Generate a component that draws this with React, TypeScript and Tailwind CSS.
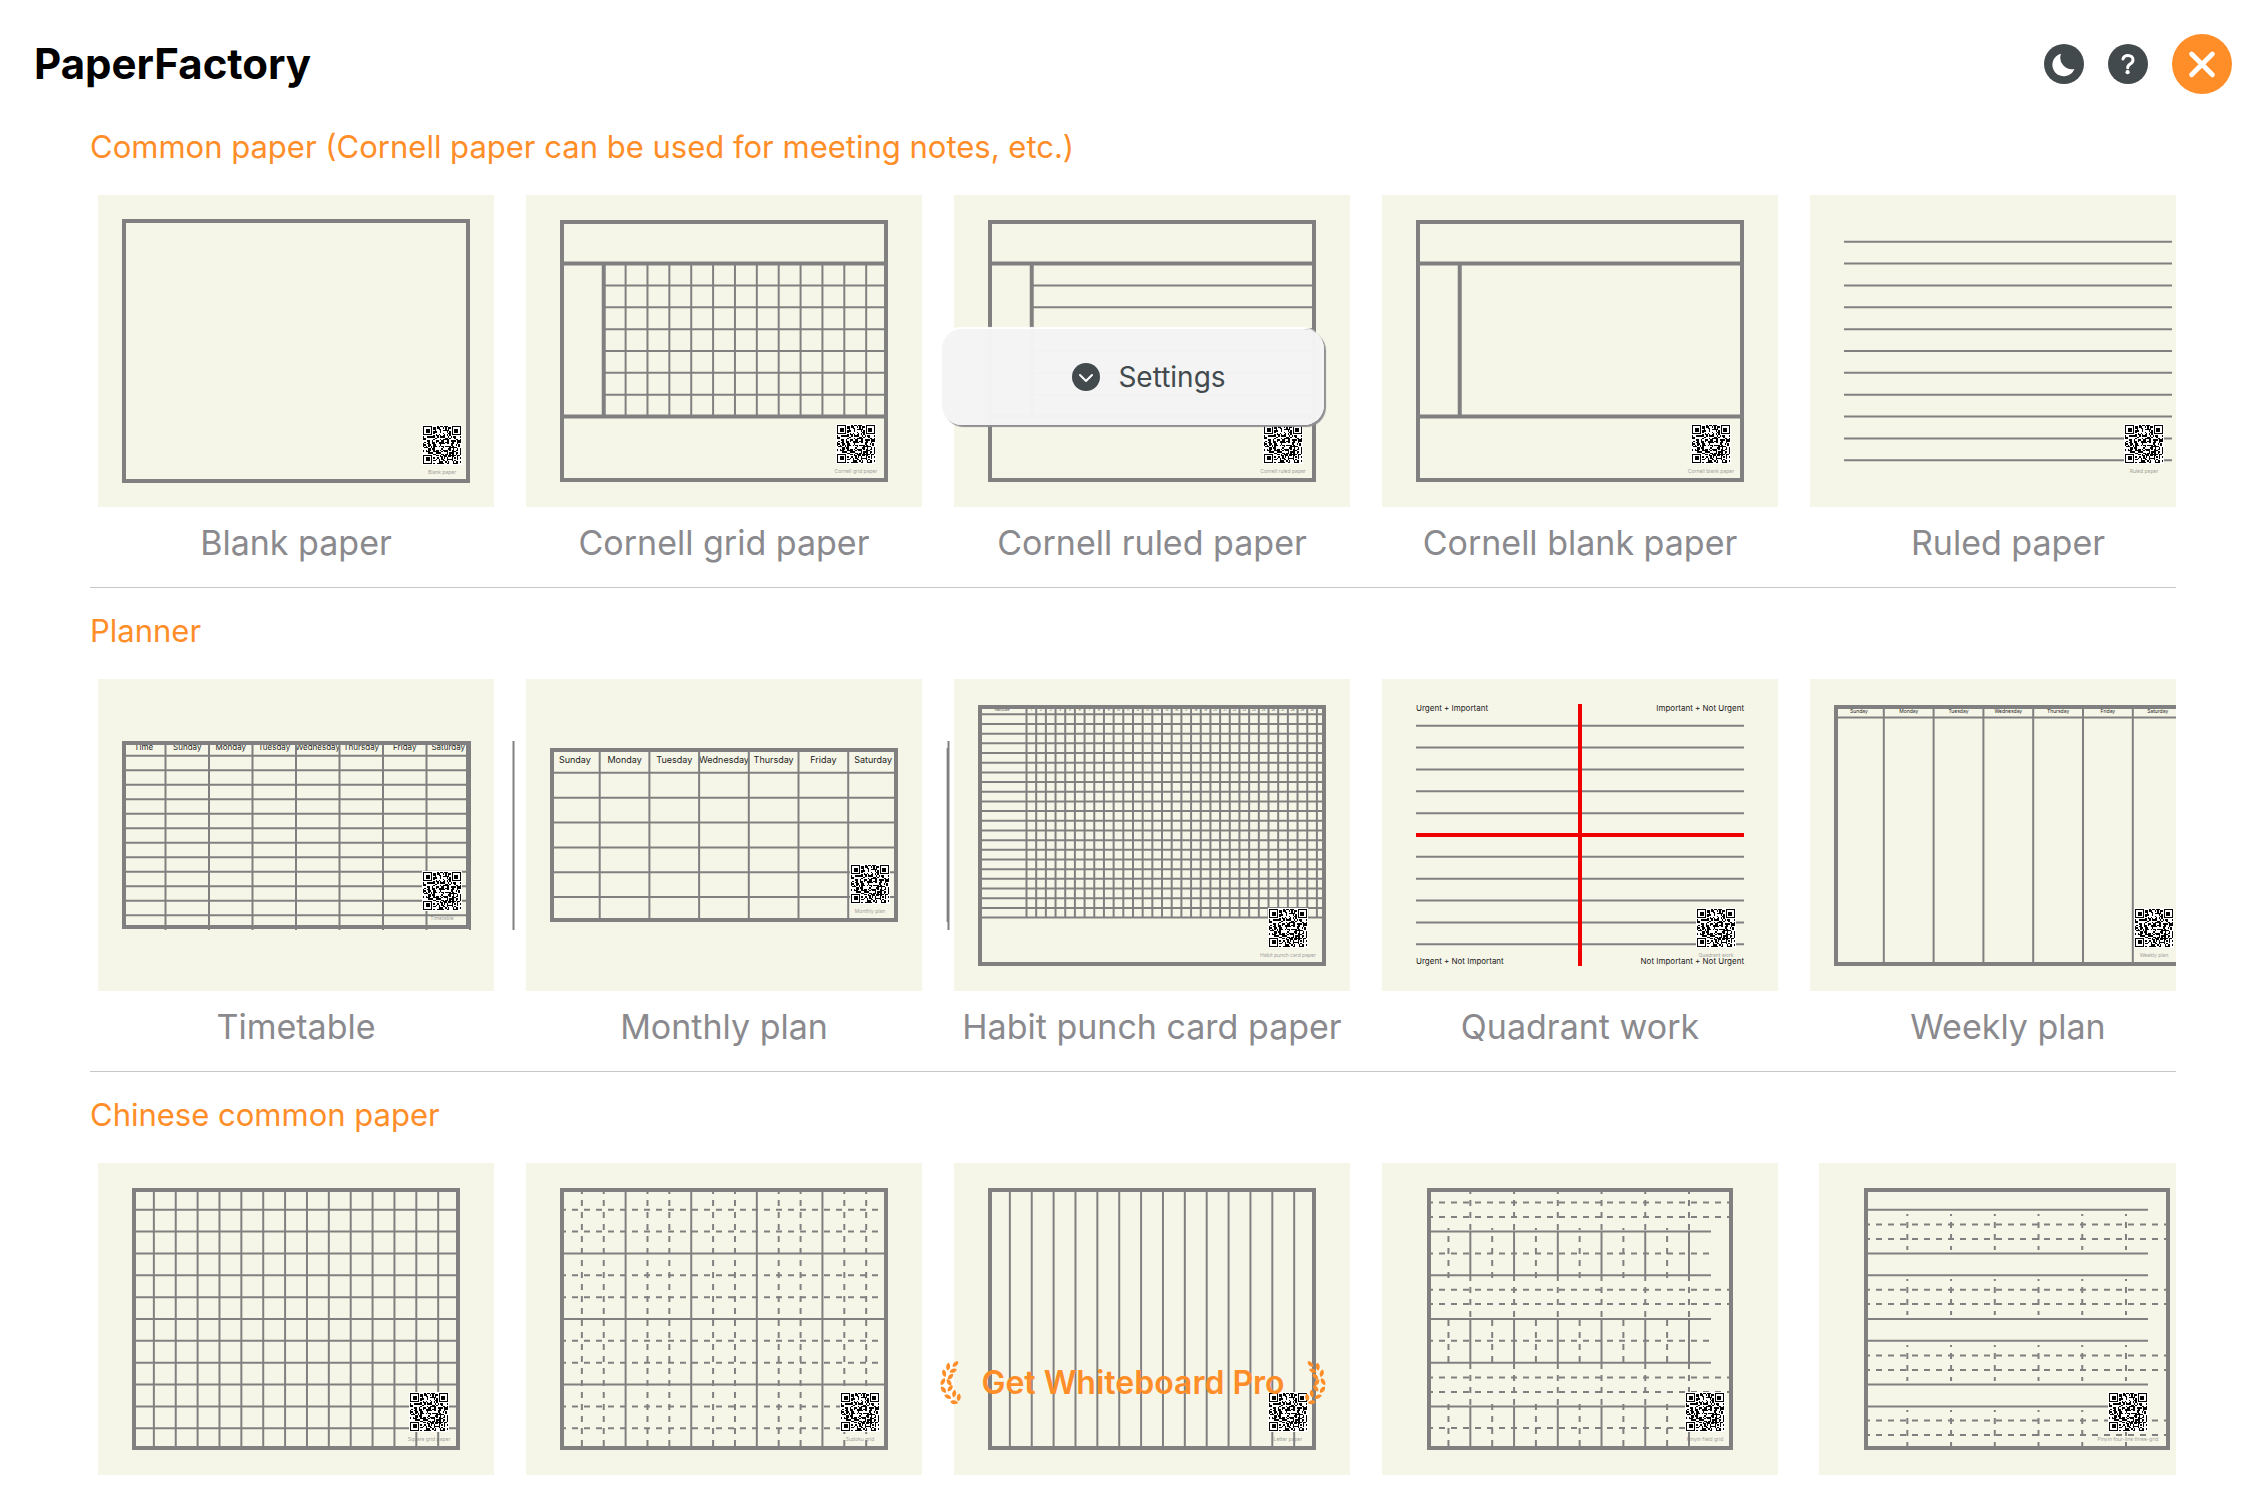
import React from 'react';

const INK = '#808080';
const PAPER = '#f6f6e8';
const STEP = 21.87;
const DAYS = ['Sunday', 'Monday', 'Tuesday', 'Wednesday', 'Thursday', 'Friday', 'Saturday'];

const range = (from: number, to: number) => Array.from({ length: to - from + 1 }, (_, i) => from + i);
const col = (i: number) => 34 + STEP * i;
const row = (i: number) => 156 + STEP * i;

type LineProps = { at: number; from: number; to: number; w?: number; dashed?: boolean; offset?: number; color?: string };

const H = ({ at, from, to, w = 2, dashed, offset = 0, color = INK }: LineProps) => (
  <line x1={from} x2={to} y1={at} y2={at} stroke={color} strokeWidth={w} strokeDasharray={dashed ? '6 6' : undefined} strokeDashoffset={offset} />
);

const V = ({ at, from, to, w = 2, dashed, offset = 0, color = INK }: LineProps) => (
  <line x1={at} x2={at} y1={from} y2={to} stroke={color} strokeWidth={w} strokeDasharray={dashed ? '6 6' : undefined} strokeDashoffset={offset} />
);

// x, y, right and bottom are the outer edges of the frame
const Frame = ({ x = 34, y = 25, r = 362, b = 287 }) => (
  <rect x={x + 2} y={y + 2} width={r - x - 4} height={b - y - 4} fill="none" stroke={INK} strokeWidth={4} />
);

// 29x29 code: three finder patterns, the rest is data modules
const QR_SIZE = 29;
const inFinder = (x: number, y: number) => (x < 8 && y < 8) || (x > 20 && y < 8) || (x < 8 && y > 20);
const buildQrPath = () => {
  let seed = 20231;
  let d = '';
  for (let y = 0; y < QR_SIZE; y++) {
    for (let x = 0; x < QR_SIZE; x++) {
      seed = (seed * 1103515245 + 12345) % 2147483648;
      if (inFinder(x, y)) continue;
      if (seed / 2147483648 > 0.48) d += `M${x} ${y}h1v1h-1z`;
    }
  }
  return d;
};
const QR_PATH = buildQrPath();

const Finder = ({ x, y }: { x: number; y: number }) => (
  <g transform={`translate(${x} ${y})`}>
    <rect x={0.5} y={0.5} width={6} height={6} fill="none" stroke="#000" />
    <rect x={2} y={2} width={3} height={3} />
  </g>
);

const QrCode = ({ x, y }: { x: number; y: number }) => (
  <g transform={`translate(${x} ${y})`}>
    <rect width={40} height={40} fill="#fff" />
    <g transform="translate(1 1) scale(1.31)" shapeRendering="crispEdges">
      <path d={QR_PATH} />
      <Finder x={0} y={0} />
      <Finder x={22} y={0} />
      <Finder x={0} y={22} />
    </g>
  </g>
);

const DayNames = ({ names, x, step, y, size }: { names: string[]; x: number; step: number; y: number; size: number }) => (
  <>
    {names.map((name, i) => (
      <text key={name} x={x + step * (i + 0.5)} y={y} fontSize={size} fill="#222" textAnchor="middle">
        {name}
      </text>
    ))}
  </>
);

const Cornell = ({ children }: { children?: React.ReactNode }) => (
  <>
    {children}
    <H at={row(-4)} from={34} to={362} w={4} />
    <H at={row(3)} from={34} to={362} w={4} />
    <V at={col(2)} from={row(-4)} to={row(3)} w={4} />
    <Frame />
  </>
);

const CornellGrid = () => (
  <Cornell>
    {range(-3, 2).map((i) => <H key={i} at={row(i)} from={78} to={362} />)}
    {range(3, 14).map((i) => <V key={i} at={col(i)} from={row(-4)} to={row(3)} />)}
  </Cornell>
);

const CornellRuled = () => (
  <Cornell>
    {range(-3, 2).map((i) => <H key={i} at={row(i)} from={78} to={362} />)}
  </Cornell>
);

const Ruled = () => <>{range(-5, 5).map((i) => <H key={i} at={row(i)} from={34} to={362} />)}</>;

const Timetable = () => (
  <>
    <DayNames names={['Time', ...DAYS]} x={24} step={43.5} y={71} size={8} />
    {range(0, 11).map((i) => <H key={i} at={76.7 + 14.5 * i} from={24} to={372} />)}
    {/* the rules run on past the frame into the gaps between the sheets */}
    {[1, 2, 3, 4, 5, 6, 7, 8, 9, 19].map((i) => <V key={i} at={24 + 43.5 * i} from={62} to={251} />)}
    <Frame x={24} y={62} r={372} b={250} />
  </>
);

const Monthly = () => (
  <>
    <DayNames names={DAYS} x={24} step={49.7} y={84} size={9} />
    {range(1, 6).map((i) => <H key={i} at={69 + 24.85 * i} from={24} to={372} />)}
    {[1, 2, 3, 4, 5, 6, 8].map((i) => <V key={i} at={24 + 49.7 * i} from={69} to={243} />)}
    <Frame x={24} y={69} r={372} b={243} />
  </>
);

const Habit = () => (
  <>
    <text x={48} y={32} fontSize={3} fill="#444" textAnchor="middle">Habit/Date</text>
    {range(1, 30).map((i) => (
      <text key={i} x={67.6 + 9.68 * i} y={32} fontSize={3} fill="#444" textAnchor="middle">{i}</text>
    ))}
    {range(0, 21).map((i) => <H key={i} at={35.3 + 9.68 * i} from={24} to={372} />)}
    {range(0, 30).map((i) => <V key={i} at={72.5 + 9.68 * i} from={26} to={238.7} />)}
    <Frame x={24} y={26} r={372} b={287} />
  </>
);

const Quadrant = () => (
  <>
    {range(-5, 5).map((i) => <H key={i} at={row(i)} from={34} to={362} />)}
    <H at={156} from={34} to={362} w={4} color="#f00000" />
    <V at={198} from={25} to={287} w={4} color="#f00000" />
    <g fontSize={8} fill="#222">
      <text x={34} y={32}>Urgent + Important</text>
      <text x={362} y={32} textAnchor="end">Important + Not Urgent</text>
      <text x={34} y={285}>Urgent + Not Important</text>
      <text x={362} y={285} textAnchor="end">Not Important + Not Urgent</text>
    </g>
  </>
);

const Weekly = () => (
  <>
    <DayNames names={DAYS} x={24} step={49.8} y={34} size={5} />
    <H at={38.5} from={24} to={372} />
    {range(1, 6).map((i) => <V key={i} at={24 + 49.8 * i} from={26} to={287} />)}
    <Frame x={24} y={26} r={372} b={287} />
  </>
);

const SquareGrid = () => (
  <>
    {range(-5, 5).map((i) => <H key={i} at={row(i)} from={34} to={362} />)}
    {range(1, 14).map((i) => <V key={i} at={col(i)} from={25} to={287} />)}
    <Frame />
  </>
);

const Sudoku = () => (
  <>
    {range(-5, 5).map((i) => <H key={i} at={row(i)} from={34} to={362} dashed={i % 3 !== 0} />)}
    {range(1, 14).map((i) => <V key={i} at={col(i)} from={25} to={287} dashed={i % 3 !== 0} />)}
    <Frame />
  </>
);

const Letter = () => (
  <>
    {range(1, 14).map((i) => <V key={i} at={col(i)} from={25} to={287} />)}
    <Frame />
  </>
);

const PinyinField = () => (
  <>
    {[68.6, 112.3, 156, 199.7, 243.4].map((y) => <H key={y} at={y} from={45} to={329} />)}
    {[39.4, 54, 126.7, 141, 214.6, 229].map((y) => <H key={y} at={y} from={45} to={351} dashed />)}
    {[90.4, 177.8, 265].map((y) => <H key={y} at={y} from={45} to={329} dashed />)}
    {range(1, 6).map((i) => {
      const x = 44.6 + 43.73 * i;
      return (
        <g key={i}>
          <V at={x} from={25} to={69} dashed />
          <V at={x} from={69} to={112} />
          <V at={x} from={112} to={156} dashed />
          <V at={x} from={156} to={200} />
          <V at={x} from={200} to={243} dashed />
          <V at={x} from={243} to={287} />
          <V at={x - 21.87} from={65} to={115} dashed offset={4} />
          <V at={x - 21.87} from={157} to={199} dashed />
          <V at={x - 21.87} from={241} to={287} dashed />
        </g>
      );
    })}
    <Frame x={45} r={351} />
  </>
);

const PinyinLines = () => (
  <>
    {[46.7, 90.4, 112.3, 156, 177.8, 221.6, 243.4].map((y) => <H key={y} at={y} from={45} to={329} />)}
    {[61.4, 76, 126.7, 141, 192.4, 207, 257.6, 272].map((y) => <H key={y} at={y} from={45} to={351} dashed />)}
    {range(1, 6).map((i) => {
      const x = 44.6 + 43.73 * i;
      return (
        <g key={i}>
          <V at={x} from={51} to={87} dashed offset={4} />
          <V at={x} from={116} to={152} dashed offset={4} />
          <V at={x} from={182} to={218} dashed offset={4} />
          <V at={x} from={247} to={287} dashed offset={4} />
        </g>
      );
    })}
    <Frame x={45} r={351} />
  </>
);

interface Sheet {
  name: string;
  draw: React.ReactNode;
  qr: [number, number];
}

const SECTIONS: { title: string; sheets: Sheet[] }[] = [
  {
    title: 'Common paper (Cornell paper can be used for meeting notes, etc.)',
    sheets: [
      { name: 'Blank paper', draw: <Frame x={24} y={24} r={372} b={288} />, qr: [324, 230] },
      { name: 'Cornell grid paper', draw: <CornellGrid />, qr: [310, 229] },
      { name: 'Cornell ruled paper', draw: <CornellRuled />, qr: [309, 229] },
      { name: 'Cornell blank paper', draw: <Cornell />, qr: [309, 229] },
      { name: 'Ruled paper', draw: <Ruled />, qr: [314, 229] },
    ],
  },
  {
    title: 'Planner',
    sheets: [
      { name: 'Timetable', draw: <Timetable />, qr: [324, 192] },
      { name: 'Monthly plan', draw: <Monthly />, qr: [324, 185] },
      { name: 'Habit punch card paper', draw: <Habit />, qr: [314, 229] },
      { name: 'Quadrant work', draw: <Quadrant />, qr: [314, 229] },
      { name: 'Weekly plan', draw: <Weekly />, qr: [324, 229] },
    ],
  },
  {
    title: 'Chinese common paper',
    sheets: [
      { name: 'Square grid paper', draw: <SquareGrid />, qr: [311, 229] },
      { name: 'Sudoku grid', draw: <Sudoku />, qr: [314, 229] },
      { name: 'Letter paper', draw: <Letter />, qr: [314, 229] },
      { name: 'Pinyin field grid', draw: <PinyinField />, qr: [303, 229] },
      { name: 'Pinyin four-line three-grid', draw: <PinyinLines />, qr: [289, 229] },
    ],
  },
];

const SheetCard = ({ name, draw, qr }: Sheet) => (
  <button type="button" className="flex shrink-0 flex-col items-center cursor-pointer">
    <svg width={396} height={312} viewBox="0 0 396 312" className="overflow-visible" aria-hidden="true">
      <rect width={396} height={312} fill={PAPER} />
      <text x={qr[0] + 20} y={qr[1] + 49} fontSize={5} fill="#a0a09c" textAnchor="middle">{name}</text>
      {draw}
      <QrCode x={qr[0]} y={qr[1]} />
    </svg>
    <span className="flex h-20 items-start pt-4 text-[34px] leading-10 whitespace-nowrap text-[#8a8a8e]">{name}</span>
  </button>
);

// x, y, angle of each leaf
const LEAVES = [
  [15, 3, -45], [7.7, 5.7, -85], [12.7, 9.7, -22], [3.7, 12.3, 75], [10, 15.7, -48],
  [2.4, 20.7, -60], [8.6, 21.5, 55], [3, 28.7, 52], [9.7, 27.3, -52], [7.3, 35.7, 25],
  [13.7, 32.7, -80], [18.3, 36.3, -82], [13.7, 41.3, 8],
];

const Laurel = ({ className = '' }: { className?: string }) => (
  <svg width={21} height={44} viewBox="0 0 21 44" className={`overflow-visible ${className}`} aria-hidden="true">
    {LEAVES.map(([x, y, a]) => (
      <path key={`${x}-${y}`} d="M-3.9 0C-2 -2.6 2 -2.6 3.9 0C2 2.6 -2 2.6 -3.9 0Z" transform={`translate(${x} ${y}) rotate(${a})`} fill="#ff8d28" />
    ))}
  </svg>
);

const Header = () => (
  <header className="flex items-center justify-between px-[34px] pt-[34px] pb-[10px]">
    <h1 className="text-[42px] leading-[60px] font-bold">PaperFactory</h1>
    <div className="flex items-center gap-6">
      <button type="button" aria-label="Dark mode" className="rounded-full cursor-pointer">
        <svg width={40} height={40} viewBox="0 0 40 40">
          <circle cx={20} cy={20} r={20} fill="#424a4d" />
          <path d="M17 9.8A11.4 11.4 0 1 0 30.4 25A11.6 11.6 0 0 1 17 9.8Z" fill="#fff" />
        </svg>
      </button>
      <button type="button" aria-label="Help" className="rounded-full cursor-pointer">
        <svg width={40} height={40} viewBox="0 0 40 40" fill="none">
          <circle cx={20} cy={20} r={20} fill="#424a4d" />
          <path d="M15 15C15.6 12.6 17.4 11.5 20 11.5C23 11.5 25 13.3 25 15.8C25 17.8 24 19 22.2 20C20.4 21.1 19.7 21.9 19.7 23.7" stroke="#fff" strokeWidth={3} strokeLinecap="round" />
          <circle cx={19.6} cy={28.2} r={2.1} fill="#fff" />
        </svg>
      </button>
      <button type="button" aria-label="Close" className="rounded-full cursor-pointer">
        <svg width={60} height={60} viewBox="0 0 60 60">
          <circle cx={30} cy={30} r={30} fill="#ff8d28" />
          <path d="M19.6 20L40.4 40.8M40.4 20L19.6 40.8" stroke="#fff" strokeWidth={4.8} strokeLinecap="round" />
        </svg>
      </button>
    </div>
  </header>
);

const App: React.FC = () => {
  return (
    <div className="relative flex h-screen flex-col overflow-hidden bg-white font-['Inter','Liberation_Sans',sans-serif] text-black">
      <Header />

      <main className="min-h-0 flex-1 overflow-y-auto px-[90px] [scrollbar-width:none]">
        {SECTIONS.map((section) => (
          <section key={section.title} className="border-b border-[#c6c6c8]">
            <h2 className="pt-[23px] pb-7 text-[31px] leading-10 text-[#ff8d28]">{section.title}</h2>
            <div className="flex gap-8 overflow-x-auto pl-2 [scrollbar-width:none]">
              {section.sheets.map((sheet) => (
                <SheetCard key={sheet.name} {...sheet} />
              ))}
            </div>
          </section>
        ))}
      </main>

      {/* Floating settings panel */}
      <button
        type="button"
        className="absolute top-[329px] left-1/2 flex h-24 w-[382px] -translate-x-1/2 items-center justify-center gap-[18px] rounded-[20px] bg-[#f4f4f4]/98 pl-8 text-[28px] text-[#424a4d] shadow-[2px_2px_1px_#8e8e93,-2px_-2px_1px_#ffffff] cursor-pointer"
      >
        <svg width={28} height={28} viewBox="0 0 28 28" fill="none" aria-hidden="true">
          <circle cx={14} cy={14} r={14} fill="#424a4d" />
          <path d="M8 12L14 18L20 12" stroke="#fff" strokeWidth={2} strokeLinecap="round" strokeLinejoin="round" />
        </svg>
        Settings
      </button>

      {/* Upgrade banner */}
      <button
        type="button"
        className="absolute bottom-[83px] left-1/2 flex -translate-x-1/2 items-center gap-5 text-[32px] leading-10 font-semibold whitespace-nowrap text-[#ff8d28] cursor-pointer"
      >
        <Laurel />
        Get Whiteboard Pro
        <Laurel className="-scale-x-100" />
      </button>
    </div>
  );
};

export default App;
